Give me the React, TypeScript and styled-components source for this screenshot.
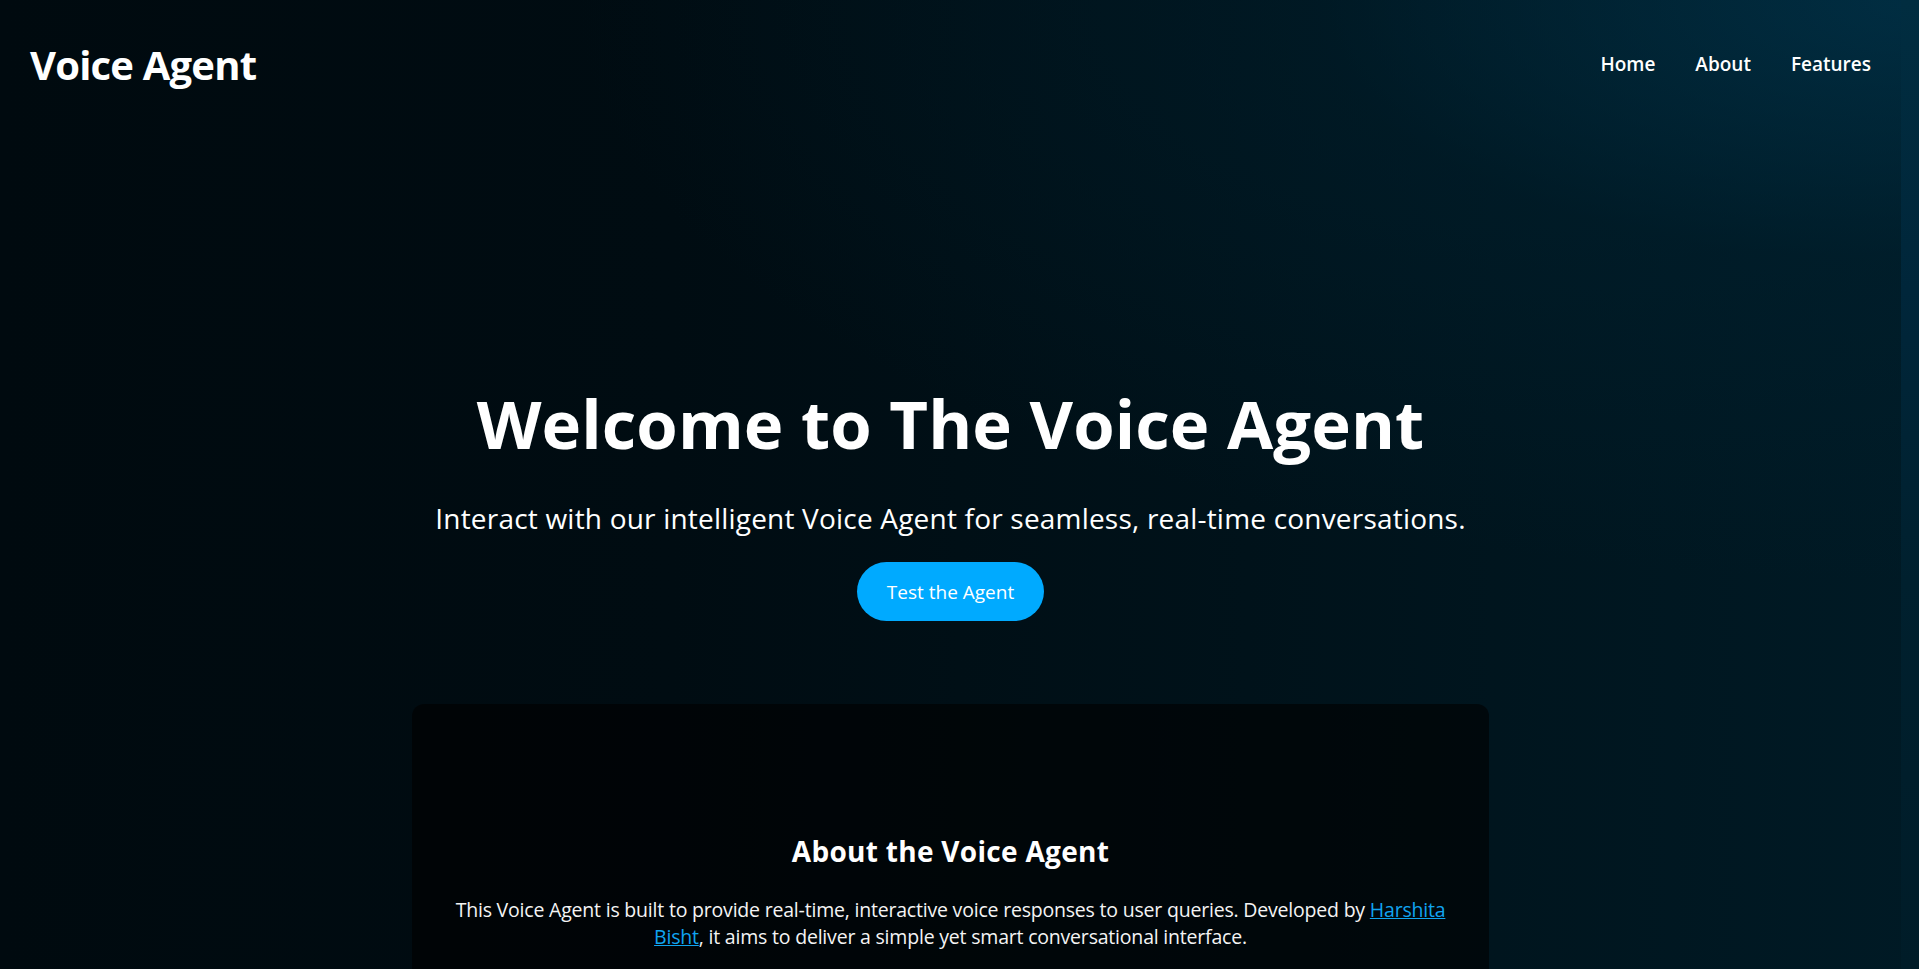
import React from "react";
import styled, { createGlobalStyle } from "styled-components";

const GlobalStyle = createGlobalStyle`
  html {
    background: #000c12;
  }
  body {
    margin: 0;
    font-family: "Open Sans", "Noto Sans", sans-serif;
    color: #ffffff;
    min-height: 100vh;
    background:
      radial-gradient(ellipse 70% 60% at 100% 0%, rgba(1, 52, 76, 0.75) 0%, rgba(0, 36, 52, 0.35) 45%, rgba(0, 20, 30, 0) 100%),
      linear-gradient(90deg, #000a0f 0%, #000c12 35%, #00121a 65%, #001a25 100%);
    background-attachment: fixed;
  }
  * { box-sizing: border-box; }
`;

const Shell = styled.div`
  display: grid;
  grid-template-columns: minmax(0, 1fr) 18px;
  min-height: 100vh;
`;

const ScrollTrack = styled.div`
  background: linear-gradient(180deg, #012d40 0%, #00263a 30%, #00202e 60%, #001c28 100%);
  background-attachment: fixed;
`;

const Page = styled.div`
  display: flex;
  flex-direction: column;
  min-height: 100vh;
  padding-bottom: 80px;
`;

const Header = styled.header`
  display: flex;
  align-items: center;
  justify-content: space-between;
  height: 128px;
  padding: 0 30px;
`;

const Logo = styled.div`
  font-size: 40px;
  font-weight: 700;
  letter-spacing: -0.8px;
`;

const Nav = styled.nav`
  display: flex;
  gap: 40px;
`;

const NavLink = styled.a`
  color: #ffffff;
  text-decoration: none;
  font-size: 19px;
  font-weight: 600;
`;

const Hero = styled.section`
  display: flex;
  flex-direction: column;
  align-items: center;
  text-align: center;
  padding-top: 249px;
`;

const Title = styled.h1`
  margin: 0;
  font-size: 67px;
  font-weight: 700;
  line-height: normal;
  letter-spacing: 0.1px;
`;

const Subtitle = styled.p`
  margin: 30px 0 0;
  font-size: 28px;
  font-weight: 400;
  line-height: normal;
  letter-spacing: 0.2px;
`;

const CTA = styled.button`
  margin-top: 25px;
  width: 187px;
  height: 59px;
  border: none;
  border-radius: 30px;
  background: #00aaff;
  color: #ffffff;
  font-family: inherit;
  font-size: 19px;
  font-weight: 400;
  cursor: pointer;
`;

const Card = styled.section`
  width: 1077px;
  margin: 83px auto 0;
  padding: 128px 32px 120px;
  border-radius: 12px;
  background: rgba(0, 0, 0, 0.6);
  text-align: center;
`;

const CardTitle = styled.h2`
  margin: 0;
  font-size: 28px;
  font-weight: 700;
  line-height: normal;
  letter-spacing: 0.3px;
`;

const CardText = styled.p`
  margin: 26px 0 0;
  font-size: 19.5px;
  line-height: 27px;
  letter-spacing: -0.2px;
  color: #f4f4f4;
`;

const Link = styled.a`
  color: #10a4f0;
`;

export default function App() {
  return (
    <>
      <GlobalStyle />
      <Shell>
        <Page>
          <Header>
            <Logo>Voice Agent</Logo>
            <Nav>
              <NavLink href="#">Home</NavLink>
              <NavLink href="#">About</NavLink>
              <NavLink href="#">Features</NavLink>
            </Nav>
          </Header>
          <Hero>
            <Title>Welcome to The Voice Agent</Title>
            <Subtitle>
              Interact with our intelligent Voice Agent for seamless, real-time conversations.
            </Subtitle>
            <CTA>Test the Agent</CTA>
          </Hero>
          <Card>
            <CardTitle>About the Voice Agent</CardTitle>
            <CardText>
              This Voice Agent is built to provide real-time, interactive voice responses to user
              queries. Developed by <Link href="#">Harshita Bisht</Link>, it aims to deliver a
              simple yet smart conversational interface.
            </CardText>
          </Card>
        </Page>
        <ScrollTrack />
      </Shell>
    </>
  );
}
